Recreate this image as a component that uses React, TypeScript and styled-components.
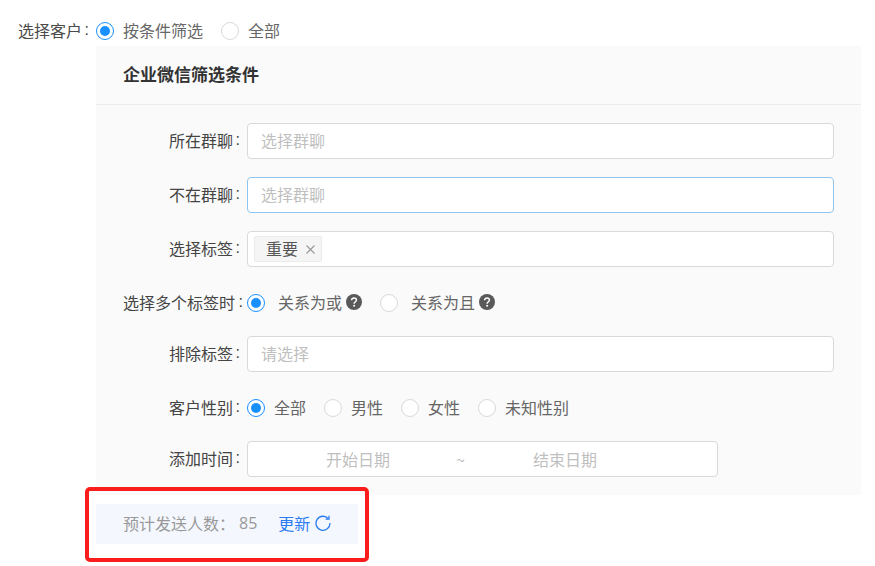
import React from 'react';
import styled, { createGlobalStyle } from 'styled-components';

const Global = createGlobalStyle`
  html, body { margin: 0; padding: 0; background: #fff; }
  body { font-family: "Noto Sans CJK SC", "Liberation Sans", sans-serif; font-size: 16px; color: #444; }
  * { box-sizing: border-box; }
`;

const Page = styled.div`
  width: 875px;
  height: 566px;
  padding: 16px 14px 0 18px;
  overflow: hidden;
`;

const TopRow = styled.div`
  display: flex;
  align-items: center;
  height: 30px;
`;

const TopLabel = styled.div`
  width: 78px;
  display: flex;
  padding-bottom: 2px;
  color: #4a4a4a;
  line-height: 20px;
  white-space: nowrap;
`;

const Colon = styled.span<{ $wide?: boolean }>`
  width: ${p => (p.$wide ? 8 : 7)}px;
  margin-right: ${p => (p.$wide ? -3 : 0)}px;
  text-align: right;
  font-family: "Liberation Sans", sans-serif;
`;

const Panel = styled.section`
  margin-left: 78px;
  width: 765px;
  height: 449px;
  background: #fafafa;
`;

const PanelHeader = styled.h3`
  margin: 0;
  height: 59px;
  padding: 0 0 4px 27px;
  display: flex;
  align-items: center;
  border-bottom: 1px solid #ececec;
  font-size: 17px;
  font-weight: 700;
  color: #333;
`;

const Form = styled.div`
  display: flex;
  flex-direction: column;
  gap: 18px;
  padding-top: 18px;
`;

const Row = styled.div<{ $radio?: boolean }>`
  display: flex;
  align-items: center;
  height: ${p => (p.$radio ? 33 : 36)}px;
  padding-top: ${p => (p.$radio ? 3 : 0)}px;
`;

const Label = styled.label`
  flex: 0 0 151px;
  display: flex;
  justify-content: flex-end;
  padding: 0 7px 2px 0;
  color: #444;
  line-height: 20px;
  white-space: nowrap;
`;

const Field = styled.div<{ $focus?: boolean; $width?: number }>`
  width: ${p => p.$width ?? 587}px;
  height: 36px;
  background: #fff;
  border: 1px solid ${p => (p.$focus ? '#8fc4ee' : '#d9d9d9')};
  border-radius: 4px;
  padding: 0 13px 2px;
  display: flex;
  align-items: center;
  color: #bfbfbf;
  line-height: 20px;
`;

const TagField = styled(Field)`
  padding: 0 6px;
`;

const Tag = styled.span`
  display: inline-flex;
  align-items: center;
  height: 26px;
  width: 68px;
  padding: 0 0 2px 11px;
  background: #f5f5f5;
  border: 1px solid #ebebeb;
  border-radius: 2px;
  color: #555;
`;

const TagClose = styled.svg`
  margin: 2px 0 0 8px;
  width: 9px;
  height: 9px;
  stroke: #999;
  stroke-width: 1.1;
  fill: none;
`;

const RadioGroup = styled.div`
  display: flex;
  align-items: center;
`;

const RadioItem = styled.div<{ $gap: number; $after: number }>`
  display: flex;
  align-items: center;
  gap: ${p => p.$gap}px;
  margin-right: ${p => p.$after}px;
  color: #666;
  line-height: 20px;
  white-space: nowrap;
`;

const RadioText = styled.span`
  padding-bottom: 2px;
`;

const RadioDot = styled.span<{ $on?: boolean }>`
  width: 18px;
  height: 18px;
  flex: none;
  border-radius: 50%;
  background: #fff;
  border: 1px solid ${p => (p.$on ? '#1890ff' : '#d9d9d9')};
  display: flex;
  align-items: center;
  justify-content: center;
  &::after {
    content: '';
    display: ${p => (p.$on ? 'block' : 'none')};
    width: 10px;
    height: 10px;
    border-radius: 50%;
    background: #1890ff;
  }
`;

const HelpWrap = styled.span<{ $pull: number }>`
  display: flex;
  width: 16px;
  height: 16px;
  margin: 0 0 2px ${p => p.$pull}px;
`;

const DateField = styled(Field)`
  padding: 0 0 0 78px;
`;

const DateText = styled.span<{ $before?: number }>`
  flex: none;
  margin-left: ${p => p.$before ?? 0}px;
  color: #bfbfbf;
`;

const Summary = styled.div`
  position: relative;
  margin: 9px 0 0 78px;
  width: 262px;
  height: 40px;
  padding: 0 0 2px 27px;
  display: flex;
  align-items: center;
  background: #f4f7fe;
  color: #999;
  line-height: 20px;
  white-space: nowrap;
`;

const Count = styled.span`
  margin-left: 4px;
  font-family: "Open Sans", sans-serif;
  font-size: 16px;
`;

const UpdateLink = styled.a`
  margin-left: 21px;
  display: inline-flex;
  align-items: center;
  gap: 5px;
  color: #2b7cf0;
`;

const Highlight = styled.div`
  position: absolute;
  left: -11px;
  top: -17px;
  width: 284px;
  height: 75px;
  border: 4px solid #fb1c1c;
  border-radius: 5px;
  pointer-events: none;
`;

const Radio = ({ on, text, gap, help }: { on?: boolean; text: string; gap: number; help?: boolean }) => (
  <RadioItem $gap={gap} $after={18}>
    <RadioDot $on={on} />
    <RadioText>{text}</RadioText>
    {help && (
      <HelpWrap $pull={4 - gap}>
        <svg width="16" height="16" viewBox="0 0 16 16">
          <circle cx="8" cy="8" r="8" fill="#595959" />
          <path d="M5.6 6.200c0-1.400 1.100-2.200 2.400-2.200s2.400.8 2.400 2.100c0 1.900-2.300 1.900-2.300 3.600" fill="none" stroke="#fff" strokeWidth="1.500" />
          <circle cx="8.100" cy="11.800" r="1" fill="#fff" />
        </svg>
      </HelpWrap>
    )}
  </RadioItem>
);

export default function App() {
  return (
    <Page>
      <Global />
      <TopRow>
        <TopLabel>选择客户<Colon>:</Colon></TopLabel>
        <RadioGroup>
          <Radio on text="按条件筛选" gap={9} />
          <Radio text="全部" gap={9} />
        </RadioGroup>
      </TopRow>
      <Panel>
        <PanelHeader>企业微信筛选条件</PanelHeader>
        <Form>
          <Row>
            <Label>所在群聊<Colon>:</Colon></Label>
            <Field>选择群聊</Field>
          </Row>
          <Row>
            <Label>不在群聊<Colon>:</Colon></Label>
            <Field $focus>选择群聊</Field>
          </Row>
          <Row>
            <Label>选择标签<Colon>:</Colon></Label>
            <TagField>
              <Tag>
                重要
                <TagClose viewBox="0 0 9 9"><path d="M.5.5l8 8M8.500.5l-8 8" /></TagClose>
              </Tag>
            </TagField>
          </Row>
          <Row $radio>
            <Label>选择多个标签时<Colon $wide>:</Colon></Label>
            <RadioGroup>
              <Radio on text="关系为或" gap={13} help />
              <Radio text="关系为且" gap={13} help />
            </RadioGroup>
          </Row>
          <Row>
            <Label>排除标签<Colon>:</Colon></Label>
            <Field>请选择</Field>
          </Row>
          <Row $radio>
            <Label>客户性别<Colon>:</Colon></Label>
            <RadioGroup>
              <Radio on text="全部" gap={9} />
              <Radio text="男性" gap={9} />
              <Radio text="女性" gap={9} />
              <Radio text="未知性别" gap={9} />
            </RadioGroup>
          </Row>
          <Row>
            <Label>添加时间<Colon>:</Colon></Label>
            <DateField $width={471}>
              <DateText>开始日期</DateText>
              <DateText $before={66}>~</DateText>
              <DateText $before={68}>结束日期</DateText>
            </DateField>
          </Row>
        </Form>
      </Panel>
      <Summary>
        预计发送人数：
        <Count>85</Count>
        <UpdateLink>
          更新
          <svg width="16" height="16" viewBox="0 0 16 16" fill="none" stroke="#2b7cf0" strokeWidth="1.300">
            <path d="M13.400 3.800A7 7 0 1 0 15 8" />
            <path d="M14 .8v3.400h-3.400" />
          </svg>
        </UpdateLink>
        <Highlight />
      </Summary>
    </Page>
  );
}
